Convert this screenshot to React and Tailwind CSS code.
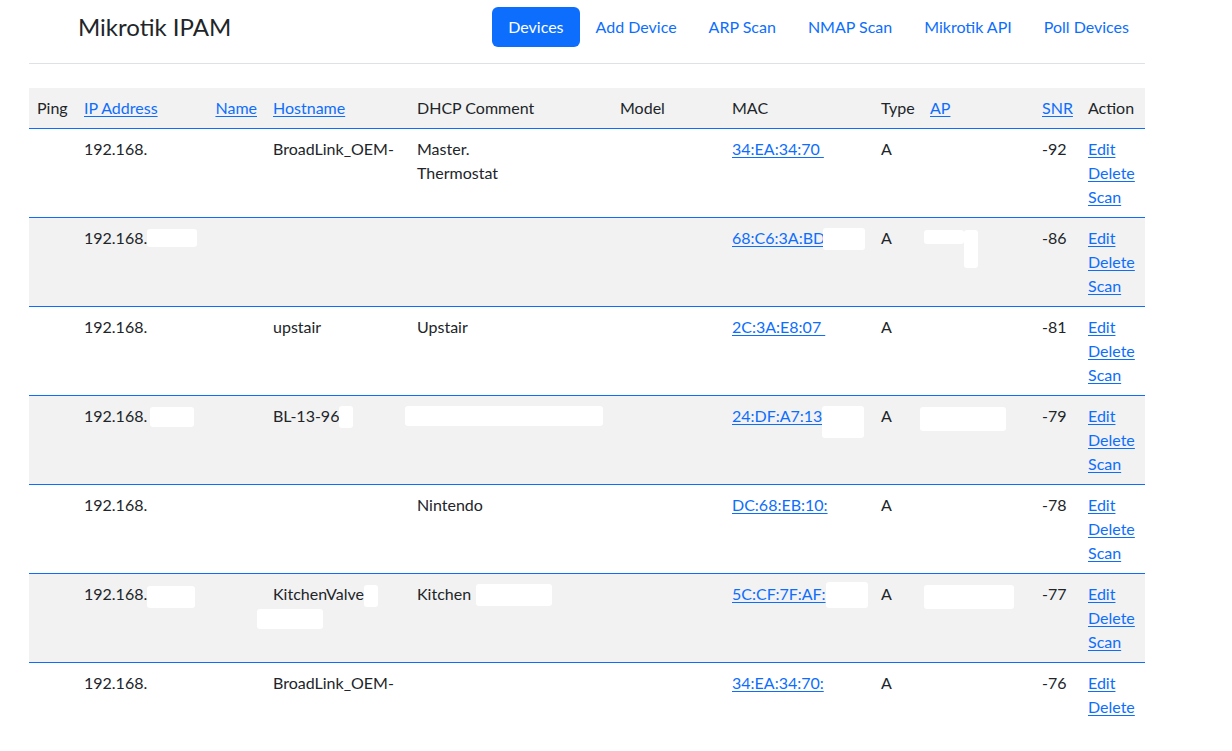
import React from 'react'

const navItems = ['Devices', 'Add Device', 'ARP Scan', 'NMAP Scan', 'Mikrotik API', 'Poll Devices']

// white patches that hide redacted values
const Blob = ({ className }) => (
  <span className={'inline-block align-top bg-white rounded-[3px] ' + className}></span>
)

const rows = [
  {
    ip: '192.168.',
    host: 'BroadLink_OEM-',
    comment: (<>Master.<br />Thermostat</>),
    mac: '34:EA:34:70\u00a0',
    snr: '-92',
  },
  {
    ip: (<>192.168.<Blob className="w-[50px] h-[18px] mt-[3px]" /></>),
    mac: '68:C6:3A:BD',
    macBlob: <Blob className="w-[42px] h-[22px] mt-[2px] -ml-[2px]" />,
    ap: (<><Blob className="w-[40px] h-[14px] mt-[4px] -ml-[6px]" /><Blob className="w-[14px] h-[38px] mt-[4px]" /></>),
    snr: '-86',
  },
  {
    ip: '192.168.',
    host: 'upstair',
    comment: 'Upstair',
    mac: '2C:3A:E8:07\u00a0',
    snr: '-81',
  },
  {
    ip: (<>192.168.<Blob className="w-[44px] h-[20px] mt-[3px] ml-[3px]" /></>),
    host: (<>BL-13-96<Blob className="w-[14px] h-[22px] mt-[2px]" /></>),
    comment: <Blob className="w-[198px] h-[20px] mt-[2px] -ml-[12px]" />,
    mac: '24:DF:A7:13',
    macBlob: <Blob className="w-[42px] h-[32px] mt-[2px]" />,
    ap: <Blob className="w-[86px] h-[24px] mt-[3px] -ml-[10px]" />,
    snr: '-79',
  },
  {
    ip: '192.168.',
    comment: 'Nintendo',
    mac: 'DC:68:EB:10:',
    snr: '-78',
  },
  {
    ip: (<>192.168.<Blob className="w-[48px] h-[22px] mt-[4px]" /></>),
    host: (<>KitchenValve<Blob className="w-[14px] h-[22px] mt-[3px]" /><br /><Blob className="w-[66px] h-[20px] -ml-[16px] mt-[2px]" /></>),
    comment: (<>Kitchen<Blob className="w-[76px] h-[22px] mt-[2px] ml-[5px]" /></>),
    mac: '5C:CF:7F:AF:',
    macBlob: <Blob className="w-[42px] h-[26px]" />,
    ap: <Blob className="w-[90px] h-[24px] mt-[3px] -ml-[6px]" />,
    snr: '-77',
  },
  {
    ip: '192.168.',
    host: 'BroadLink_OEM-',
    mac: '34:EA:34:70:',
    snr: '-76',
    actions: ['Edit', 'Delete'],
  },
]

const Link = ({ children }) => (
  <a href="#" className="text-[#0d6efd] underline underline-offset-[2px]">{children}</a>
)

export default function App() {
  return (
    <div className="min-h-screen bg-white text-[#212529] text-[16px] leading-6" style={{ fontFamily: 'Lato, "Noto Sans", sans-serif' }}>
      <div className="w-[1116px] ml-[29px]">
        <header className="flex items-center justify-between pt-[7px] pb-[16px] border-b border-[#dee2e6]">
          <div className="pl-[49px] text-[24px] leading-[40px] text-[#212529]">Mikrotik IPAM</div>
          <ul className="flex">
            {navItems.map((item, i) => (
              <li key={item}>
                <a
                  href="#"
                  className={
                    i === 0
                      ? 'block px-4 h-[40px] leading-[40px] rounded-[6px] bg-[#0d6efd] text-white'
                      : 'block px-4 h-[40px] leading-[40px] text-[#0d6efd]'
                  }
                >
                  {item}
                </a>
              </li>
            ))}
          </ul>
        </header>

        <table className="w-full mt-[24px] table-fixed border-collapse">
          <colgroup>
            <col className="w-[47px]" />
            <col className="w-[131px]" />
            <col className="w-[58px]" />
            <col className="w-[144px]" />
            <col className="w-[203px]" />
            <col className="w-[112px]" />
            <col className="w-[149px]" />
            <col className="w-[49px]" />
            <col className="w-[112px]" />
            <col className="w-[46px]" />
            <col className="w-[65px]" />
          </colgroup>
          <thead>
            <tr className="bg-[#f2f2f2] border-b border-[#0d6efd] text-left">
              <th className="font-normal px-2 py-2">Ping</th>
              <th className="font-normal px-2 py-2"><Link>IP Address</Link></th>
              <th className="font-normal px-2 py-2 text-right"><Link>Name</Link></th>
              <th className="font-normal px-2 py-2"><Link>Hostname</Link></th>
              <th className="font-normal px-2 py-2">DHCP Comment</th>
              <th className="font-normal px-2 py-2">Model</th>
              <th className="font-normal px-2 py-2">MAC</th>
              <th className="font-normal px-2 py-2">Type</th>
              <th className="font-normal px-2 py-2"><Link>AP</Link></th>
              <th className="font-normal px-2 py-2"><Link>SNR</Link></th>
              <th className="font-normal px-2 py-2">Action</th>
            </tr>
          </thead>
          <tbody>
            {rows.map((r, i) => (
              <tr
                key={i}
                className={
                  (i % 2 === 1 ? 'bg-[#f2f2f2] ' : 'bg-white ') +
                  (i === rows.length - 1 ? '' : 'border-b border-[#0d6efd] ') +
                  'align-top'
                }
              >
                <td className="px-2 py-2"></td>
                <td className="px-2 py-2 whitespace-nowrap">{r.ip}</td>
                <td className="px-2 py-2"></td>
                <td className="px-2 py-2 whitespace-nowrap">{r.host}</td>
                <td className="px-2 py-2 whitespace-nowrap">{r.comment}</td>
                <td className="px-2 py-2"></td>
                <td className="px-2 py-2 whitespace-nowrap"><Link>{r.mac}</Link>{r.macBlob}</td>
                <td className="px-2 py-2">A</td>
                <td className="px-2 py-2 whitespace-nowrap">{r.ap}</td>
                <td className="px-2 py-2">{r.snr}</td>
                <td className="px-2 py-2">
                  {(r.actions || ['Edit', 'Delete', 'Scan']).map((a) => (
                    <div key={a}><Link>{a}</Link></div>
                  ))}
                </td>
              </tr>
            ))}
          </tbody>
        </table>
      </div>
    </div>
  )
}
